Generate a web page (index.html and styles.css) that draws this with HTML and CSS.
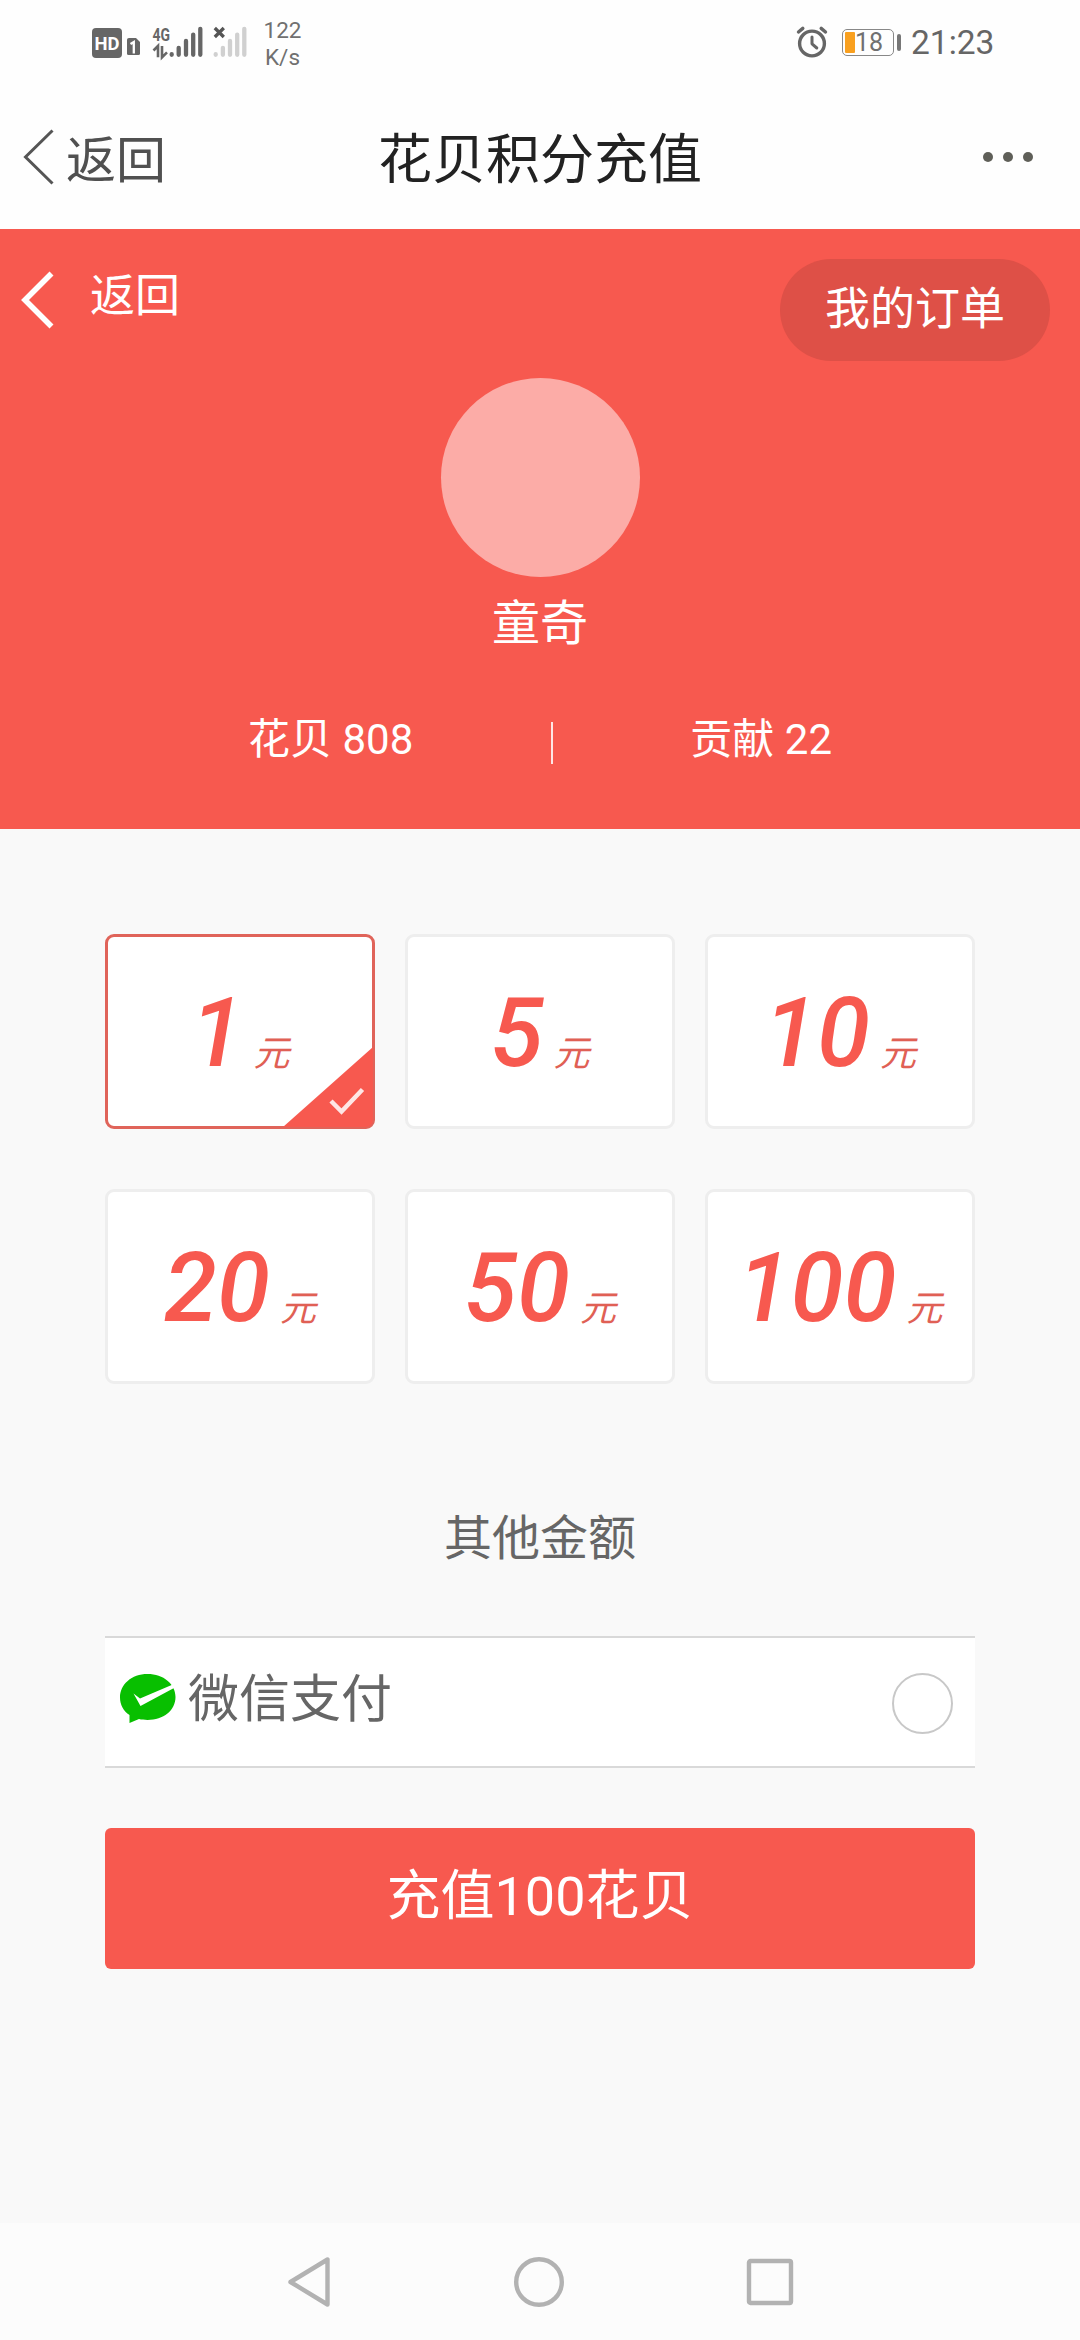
FILE: index.html
```html
<!DOCTYPE html>
<html lang="zh-CN">
<head>
<meta charset="utf-8">
<title>花贝积分充值</title>
<link rel="stylesheet" href="styles.css">
</head>
<body>
<div class="screen">
  <header class="status">
    <svg class="status-signal" width="168" height="40" viewBox="88 22 168 40">
      <rect x="92" y="28" width="30" height="30" rx="4" fill="#666"/>
      <text class="hd-label" x="94.5" y="50" textLength="25" lengthAdjust="spacingAndGlyphs">HD</text>
      <path d="M129 38h7l4 4v11.500q0 1.500-1.500 1.500h-10q-1.500 0-1.500-1.500v-14q0-1.500 2-1.500z" fill="#666"/>
      <path d="M130.500 44l3.300-2v11.500" fill="none" stroke="#fff" stroke-width="2.300"/>
      <text class="net-label" x="152.500" y="40.500" textLength="17.500" lengthAdjust="spacingAndGlyphs">4G</text>
      <path d="M153.500 50.500l4.500-4.500v11.300M162 46v11.300l5-5" fill="none" stroke="#666" stroke-width="2.600"/>
      <g stroke="#666" stroke-width="4.300" stroke-linecap="round">
        <path d="M171.700 54.200v.6M178.700 47.800v7M186 41v13.800M193.200 34.600v20.200M200.300 28.800v26"/>
      </g>
      <g stroke="#d0d0d0" stroke-width="4.300" stroke-linecap="round">
        <path d="M215.700 54.200v.6M222.900 47.800v7M230 41v13.800M237.200 34.600v20.200M244.300 28.800v26"/>
      </g>
      <path d="M214.800 28l9 9M223.800 28l-9 9" stroke="#555" stroke-width="3.300"/>
    </svg>
    <div class="speed"><span>122</span><span>K/s</span></div>
    <svg class="alarm" width="34" height="34" viewBox="794 25 34 34" fill="none" stroke="#666" stroke-linecap="round">
      <circle cx="811" cy="43.500" r="12.400" stroke-width="3.400"/>
      <path d="M811 37v6.800l4.800 4.200" stroke-width="3" stroke-linejoin="round"/>
      <path d="M797.500 32l4.300-3.600M824.500 32l-4.300-3.600" stroke-width="3.400"/>
    </svg>
    <div class="battery"><i class="battery-level"></i><span class="battery-text">18</span></div>
    <i class="battery-tip"></i>
    <span class="clock">21:23</span>
  </header>

  <nav class="titlebar">
    <a class="title-back">
      <svg width="33" height="58" viewBox="0 0 33 58" fill="none" stroke="#555" stroke-width="3"><path d="M30.500 2.500L3.500 29l27 26.500"/></svg>
      <span>返回</span>
    </a>
    <h1 class="title">花贝积分充值</h1>
    <div class="more"><i></i><i></i><i></i></div>
  </nav>

  <section class="profile">
    <div class="profile-top">
      <a class="profile-back">
        <svg width="36" height="60" viewBox="0 0 36 60" fill="none" stroke="#fff" stroke-width="5.600"><path d="M33.500 4.500L7 31l26.500 26.500"/></svg>
        <span>返回</span>
      </a>
      <a class="orders">我的订单</a>
    </div>
    <div class="avatar"></div>
    <div class="name">童奇</div>
    <div class="stats">
      <span class="stat">花贝 808</span>
      <i class="divider"></i>
      <span class="stat">贡献 22</span>
    </div>
  </section>

  <main class="content">
    <div class="amounts">
      <div class="amount selected"><b>1</b><span>元</span>
        <svg class="corner" width="90" height="80" viewBox="0 0 90 80"><path d="M90 0v80H0z" fill="#f7594f"/><path d="M48 54l10.500 10.500L79.500 42.500" fill="none" stroke="#fff" stroke-opacity=".85" stroke-width="4.500"/></svg>
      </div>
      <div class="amount"><b>5</b><span>元</span></div>
      <div class="amount"><b>10</b><span>元</span></div>
      <div class="amount"><b>20</b><span>元</span></div>
      <div class="amount"><b>50</b><span>元</span></div>
      <div class="amount"><b>100</b><span>元</span></div>
    </div>
    <div class="other">其他金额</div>
    <div class="pay">
      <svg class="pay-icon" width="58" height="52" viewBox="0 0 58 52">
        <path d="M28.500 1C12.500 1 1 11.500 1 24.500c0 7.500 3.500 13.500 9.500 17.500v8l9.500-4c2.500.6 5.500.9 8.500.9 16 0 28-9.500 28-22.900C56.500 11 44.500 1 28.500 1z" fill="#08bf00"/>
        <path d="M14.500 20.500l6.500 5L55 11v4L21.500 33z" fill="#fff"/>
      </svg>
      <span class="pay-label">微信支付</span>
      <i class="radio"></i>
    </div>
    <button class="submit">充值100花贝</button>
  </main>

  <footer class="navkeys">
    <svg width="46" height="54" viewBox="0 0 46 54"><path d="M41.500 4.500v45L4.500 27z"/></svg>
    <svg width="54" height="54" viewBox="0 0 54 54"><circle cx="27" cy="27" r="22.800"/></svg>
    <svg width="50" height="54" viewBox="0 0 50 54"><rect x="4" y="6" width="42" height="42" rx="1.500"/></svg>
  </footer>
</div>
</body>
</html>
```

FILE: styles.css
```css
* { box-sizing: border-box; }

body {
  margin: 0;
  font-family: Roboto, "Noto Sans CJK SC", sans-serif;
  color: #666;
}

.screen {
  width: 1080px;
  height: 2340px;
  display: flex;
  flex-direction: column;
  background: #f9f9f9;
}

/* System status bar */
.status {
  height: 84px;
  padding: 0 84px 0 88px;
  display: flex;
  align-items: center;
  background: #fefefe;
}

.hd-label { font: 700 19px Roboto, sans-serif; fill: #fff; }
.net-label { font: 700 18px Roboto, sans-serif; fill: #666; }

.speed {
  width: 45px;
  margin: 3px auto 0 4px;
  display: flex;
  flex-direction: column;
  align-items: center;
  font-size: 22.5px;
  line-height: 27px;
  color: #707070;
}

.alarm { margin-right: 13px; }

.battery {
  width: 52px;
  height: 27px;
  padding: 2px;
  display: flex;
  align-items: center;
  border: 1.5px solid #888;
  border-radius: 5px;
}

.battery-level {
  width: 10px;
  height: 21px;
  border-radius: 1px;
  background: #f9a01f;
}

.battery-text {
  font-size: 25px;
  line-height: 25px;
  color: #707070;
}

.battery-tip {
  width: 4px;
  height: 17px;
  margin: 0 10px 0 3px;
  border-radius: 2px;
  background: #777;
}

.clock {
  width: 85px;
  font-size: 33.5px;
  line-height: 40px;
  margin-top: 2px;
}

/* App title bar */
.titlebar {
  height: 145px;
  padding: 0 47px 0 22px;
  display: grid;
  grid-template-columns: 1fr auto 1fr;
  align-items: center;
  background: #fefefe;
  color: #505050;
}

.title-back {
  display: flex;
  align-items: center;
  gap: 11px;
  font-size: 50px;
  line-height: 60px;
}

.title-back span { margin-top: 9px; }

.title {
  margin: 9px 0 0 25px;
  font-size: 54px;
  line-height: 64px;
  font-weight: 400;
  color: #222;
}

.more {
  display: flex;
  justify-content: flex-end;
  gap: 10px;
}

.more i {
  width: 10px;
  height: 10px;
  border-radius: 50%;
  background: #5f5f58;
}

/* Profile banner */
.profile {
  height: 600px;
  padding-top: 30px;
  display: flex;
  flex-direction: column;
  align-items: center;
  background: #f7594f;
  color: #fff;
}

.profile-top {
  width: 100%;
  height: 119px;
  padding: 0 30px 0 18px;
  display: flex;
  justify-content: space-between;
  align-items: flex-start;
  font-size: 45px;
}

.profile-back {
  display: flex;
  align-items: center;
  gap: 36px;
  margin-top: 10px;
  line-height: 54px;
}

.profile-back span { margin-top: -4px; }

.orders {
  width: 270px;
  height: 102px;
  border-radius: 51px;
  background: #de5047;
  line-height: 101px;
  text-align: center;
}

.avatar {
  width: 199px;
  height: 199px;
  border-radius: 50%;
  background: #fcaca7;
}

.name {
  margin-top: 17px;
  font-size: 48px;
  line-height: 60px;
}

.stats {
  width: 584px;
  margin-top: 56px;
  display: flex;
  align-items: center;
  justify-content: space-between;
  font-size: 42px;
  line-height: 60px;
}

.divider {
  width: 2px;
  height: 42px;
  margin-top: 6px;
  background: rgba(255, 255, 255, .85);
}

/* Top-up form */
.content {
  flex: 1;
  padding: 105px 105px 0;
}

.amounts {
  display: grid;
  grid-template-columns: repeat(3, 270px);
  grid-auto-rows: 195px;
  gap: 60px 30px;
}

.amount {
  position: relative;
  display: flex;
  justify-content: center;
  align-items: baseline;
  gap: 10px;
  padding-top: 41px;
  border: 3px solid #eee;
  border-radius: 9px;
  background: #fff;
  color: #f7594f;
  font-style: italic;
}

.amount b {
  font-size: 96px;
  line-height: 110px;
  font-weight: 500;
}

.amount span {
  font-size: 36px;
  color: #e06055;
}

.selected { border-color: #e0645a; }

.corner {
  position: absolute;
  right: -1px;
  bottom: -1px;
  border-bottom-right-radius: 7px;
}

.other {
  margin-top: 120px;
  height: 132px;
  font-size: 48px;
  line-height: 70px;
  text-align: center;
}

.pay {
  height: 132px;
  padding: 0 22px 0 14px;
  display: flex;
  align-items: center;
  background: #fff;
  border-top: 2px solid #d9d9d9;
  border-bottom: 2px solid #d9d9d9;
}

.pay-icon { margin-top: -6px; }

.pay-label {
  flex: 1;
  margin: -4px 0 0 11px;
  font-size: 51px;
  line-height: 60px;
}

.radio {
  width: 61px;
  height: 61px;
  margin-top: 3px;
  border: 2.9px solid #c8c8c8;
  border-radius: 50%;
}

.submit {
  display: block;
  width: 100%;
  height: 141px;
  margin-top: 60px;
  padding: 0 0 4px;
  border: 0;
  border-radius: 6px;
  background: #f7594f;
  color: #fff;
  font: 400 54px/64px Roboto, "Noto Sans CJK SC", sans-serif;
}

/* Android navigation keys */
.navkeys {
  height: 117px;
  padding: 0 285px 0 286px;
  display: flex;
  justify-content: space-between;
  align-items: center;
  background: #fcfcfc;
}

.navkeys svg {
  fill: none;
  stroke: #b2b2b2;
  stroke-width: 4.4px;
  stroke-linejoin: round;
}
```
